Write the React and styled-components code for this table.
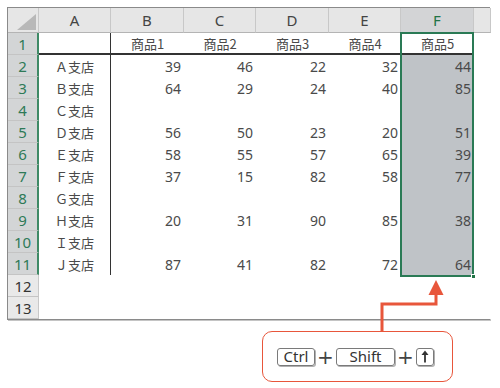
import React from 'react'
import styled, { createGlobalStyle } from 'styled-components'

const GlobalStyle = createGlobalStyle`
  html, body { margin: 0; padding: 0; background: #fff; }
  * { box-sizing: border-box; }
`

const cols = ['A', 'B', 'C', 'D', 'E', 'F']
const items = ['商品1', '商品2', '商品3', '商品4', '商品5']
const rows = [
  ['Ａ支店', 39, 46, 22, 32, 44],
  ['Ｂ支店', 64, 29, 24, 40, 85],
  ['Ｃ支店'],
  ['Ｄ支店', 56, 50, 23, 20, 51],
  ['Ｅ支店', 58, 55, 57, 65, 39],
  ['Ｆ支店', 37, 15, 82, 58, 77],
  ['Ｇ支店'],
  ['Ｈ支店', 20, 31, 90, 85, 38],
  ['Ｉ支店'],
  ['Ｊ支店', 87, 41, 82, 72, 64],
]

function App() {
  return (
    <Page>
      <GlobalStyle />
      <Sheet>
        <Corner>
          <svg width="22" height="16" viewBox="0 0 22 16">
            <polygon points="22,0 22,16 3,16" fill="#b8b8b8" />
          </svg>
        </Corner>
        {cols.map(c => (
          <ColHead key={c} $active={c === 'F'}>{c}</ColHead>
        ))}
        <ColHead />

        <RowHead $active>1</RowHead>
        <Cell $under $divide />
        {items.map((t, i) => (
          <Cell key={t} $under $align="center" $fill={i === 4 ? '#fff' : null}>{t}</Cell>
        ))}
        <Cell />

        {rows.map((r, i) => (
          <React.Fragment key={r[0]}>
            <RowHead $active>{i + 2}</RowHead>
            <Cell $divide $align="center">{r[0]}</Cell>
            {[1, 2, 3, 4, 5].map(k => (
              <Cell key={k} $num $fill={k === 5 ? '#bfc3c7' : null}>{r[k]}</Cell>
            ))}
            <Cell />
          </React.Fragment>
        ))}

        {[12, 13].map(n => (
          <React.Fragment key={n}>
            <RowHead>{n}</RowHead>
            {[0, 1, 2, 3, 4, 5, 6].map(k => <Cell key={k} />)}
          </React.Fragment>
        ))}

        <Selection>
          <Handle />
        </Selection>
      </Sheet>

      <CalloutRow>
        <Callout>
          <Key>Ctrl</Key>
          <Plus>+</Plus>
          <Key $wide>Shift</Key>
          <Plus>+</Plus>
          <Key $small aria-label="↑">
            <svg width="10" height="13" viewBox="0 0 10 13">
              <path d="M5 12.5 V3" stroke="#333" strokeWidth="1.8" />
              <polygon points="1.5,5 8.5,5 5,0.5" fill="#333" />
            </svg>
          </Key>
        </Callout>
      </CalloutRow>

      <Arrow width="500" height="388" viewBox="0 0 500 388">
        <path d="M382 331 V304 H436 V292" fill="none" stroke="#e8563b" strokeWidth="3" />
        <polygon points="428.5,295 443.5,295 436,280" fill="#e8563b" />
      </Arrow>
    </Page>
  )
}

export default App

const Page = styled.div`
  position: relative;
  width: 500px;
  height: 388px;
  padding: 7px 0 0 7px;
  font-family: "Noto Sans CJK JP", "Noto Sans", sans-serif;
  color: #444;
`

const Sheet = styled.div`
  position: relative;
  display: grid;
  grid-template-columns: 31px 72px 73px 72px 73px 72px 73px 17px;
  grid-template-rows: 25px repeat(13, 22px);
  width: 483px;
  border: 1px solid #8a8a8a;
  box-shadow: 1px 1px 0 #c4c4c4;
  background: #fff;
`

const Corner = styled.div`
  background: #e6e6e6;
  border-right: 1px solid #c8c8c8;
  border-bottom: 1px solid #b4b4b4;
  display: flex;
  align-items: flex-end;
  justify-content: flex-end;
  padding: 0 2px 2px 0;
`

const ColHead = styled.div`
  background: ${p => (p.$active ? '#d3d4d6' : '#e6e6e6')};
  color: ${p => (p.$active ? '#217346' : '#444')};
  border-right: 1px solid #c8c8c8;
  border-bottom: 1px solid ${p => (p.$active ? '#217346' : '#b4b4b4')};
  font-family: "Noto Sans", sans-serif;
  font-size: 15px;
  display: flex;
  align-items: center;
  justify-content: center;
`

const RowHead = styled.div`
  background: ${p => (p.$active ? '#d3d5d6' : '#e9e9e9')};
  color: ${p => (p.$active ? '#2e7a57' : '#333')};
  border-right: ${p => (p.$active ? '2px solid #3f8a66' : '1px solid #c8c8c8')};
  border-bottom: 1px solid #c4c4c4;
  font-family: "Noto Sans", sans-serif;
  font-size: 15px;
  display: flex;
  align-items: center;
  justify-content: center;
`

const Cell = styled.div`
  background: ${p => p.$fill || '#fff'};
  border-bottom: ${p => (p.$under ? '2px solid #333' : 'none')};
  border-right: ${p => (p.$divide ? '1.5px solid #333' : 'none')};
  font-family: ${p => (p.$num ? '"Noto Sans", sans-serif' : '"Noto Sans CJK JP", sans-serif')};
  font-size: ${p => (p.$num ? '14px' : '13px')};
  display: flex;
  align-items: center;
  justify-content: ${p => (p.$align === 'center' ? 'center' : 'flex-end')};
  padding: 0 3px;
  color: #4a4a4a;
`

const Selection = styled.div`
  position: absolute;
  left: 392px;
  top: 24px;
  width: 74px;
  height: 245px;
  border: 2px solid #2a7a55;
  pointer-events: none;
`

const Handle = styled.div`
  position: absolute;
  right: -4px;
  bottom: -4px;
  width: 5px;
  height: 5px;
  background: #217346;
  border: 1px solid #fff;
`

const CalloutRow = styled.div`
  display: flex;
  padding: 11px 0 0 255px;
`

const Callout = styled.div`
  width: 191px;
  height: 51px;
  border: 1.5px solid #e8563b;
  border-radius: 10px;
  background: #fff;
  display: flex;
  align-items: center;
  padding: 0 0 0 14px;
`

const Key = styled.span`
  display: inline-flex;
  align-items: center;
  justify-content: center;
  width: ${p => (p.$wide ? '59px' : p.$small ? '18px' : '38px')};
  height: 18px;
  border: 1px solid #7a7a7a;
  border-radius: 3px;
  box-shadow: 1px 1px 0 #b0b0b0;
  font-family: "Noto Sans", sans-serif;
  font-size: 15px;
  font-weight: 400;
  color: #333;
  line-height: 1;
`

const Plus = styled.span`
  width: 21px;
  text-align: center;
  font-family: "DejaVu Sans", sans-serif;
  font-size: 20px;
  color: #444;
  line-height: 1;
`

const Arrow = styled.svg`
  position: absolute;
  left: 0;
  top: 0;
  pointer-events: none;
`
